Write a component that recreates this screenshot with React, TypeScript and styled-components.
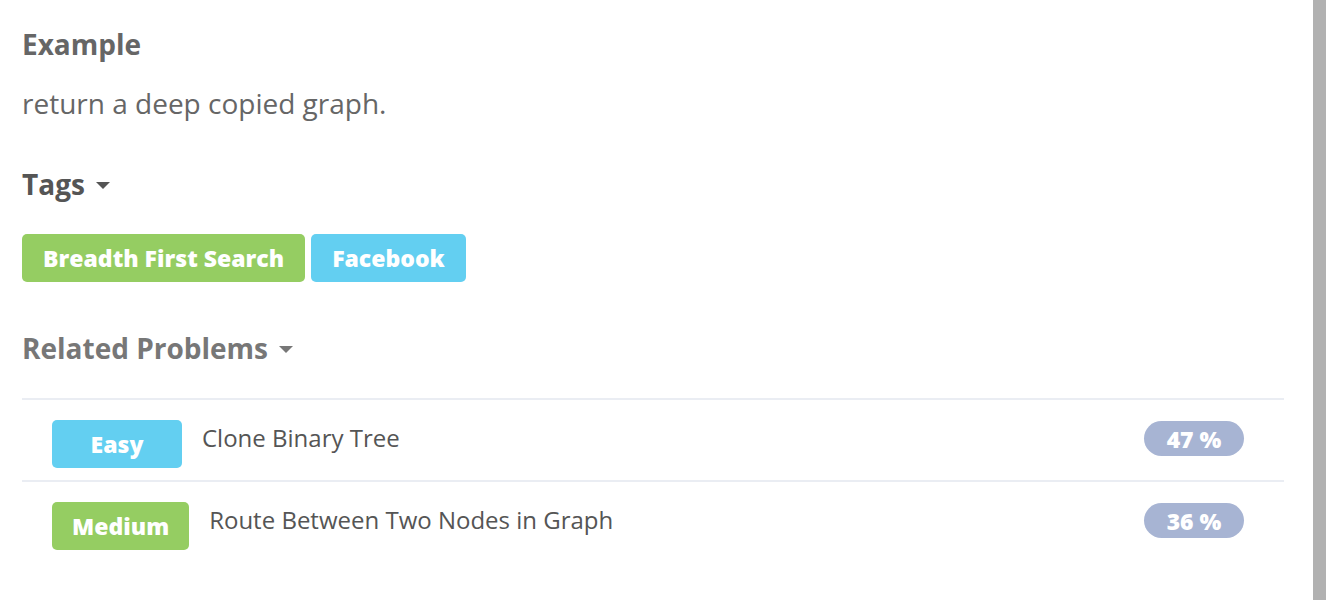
import React from "react";
import styled, { createGlobalStyle } from "styled-components";

const Global = createGlobalStyle`
  html, body { margin: 0; padding: 0; background: #fff; }
  body { font-family: "Open Sans", "Liberation Sans", sans-serif; }
`;

const Page = styled.div`
  display: flex;
  height: 600px;
  overflow: hidden;
`;

const Main = styled.div`
  flex: 1;
  padding: 24px 29px 0 22px;
`;

const ScrollTrack = styled.div`
  width: 13px;
  background: #b1b1b1;
`;

const Heading = styled.h3<{ $tone?: string }>`
  margin: 0;
  font-size: 28px;
  line-height: 40px;
  font-weight: 700;
  color: ${(p) => p.$tone || "#666"};
  display: flex;
  align-items: center;
  gap: 11px;
`;

const Caret = styled.span<{ $tone?: string }>`
  width: 0;
  height: 0;
  border-left: 7px solid transparent;
  border-right: 7px solid transparent;
  border-top: 7px solid ${(p) => p.$tone || "#666"};
  margin-top: 2px;
`;

const Paragraph = styled.p`
  margin: 19px 0 0;
  font-size: 28px;
  line-height: 40px;
  color: #666;
`;

const Section = styled.div<{ $top: number }>`
  margin-top: ${(p) => p.$top}px;
`;

const TagRow = styled.div`
  display: flex;
  gap: 6px;
  margin-top: 30px;
`;

const Tag = styled.span<{ $bg: string }>`
  display: inline-flex;
  align-items: center;
  height: 48px;
  padding: 0 21px;
  border-radius: 5px;
  background: ${(p) => p.$bg};
  color: #fff;
  font-size: 23px;
  font-weight: 800;
`;

const List = styled.div`
  margin-top: 30px;
  border-top: 2px solid #eaedf3;
`;

const Row = styled.div`
  display: flex;
  align-items: flex-start;
  height: 60px;
  padding: 20px 40px 0 30px;
  box-sizing: content-box;
  & + & {
    border-top: 2px solid #eaedf3;
  }
`;

const Level = styled.span<{ $bg: string }>`
  display: inline-flex;
  align-items: center;
  justify-content: center;
  min-width: 130px;
  box-sizing: border-box;
  height: 48px;
  padding: 0 20px;
  border-radius: 5px;
  background: ${(p) => p.$bg};
  color: #fff;
  font-size: 23px;
  font-weight: 800;
`;

const Title = styled.span`
  flex: 1;
  margin-left: 20px;
  font-size: 24px;
  line-height: 36px;
  color: #555;
`;

const Rate = styled.span`
  display: inline-flex;
  align-items: center;
  justify-content: center;
  width: 100px;
  height: 35px;
  margin-top: 1px;
  border-radius: 18px;
  background: #a7b4d3;
  color: #fff;
  font-size: 23px;
  font-weight: 800;
`;

const GREEN = "#95cd62";
const BLUE = "#63cff1";

const problems = [
  { level: "Easy", color: BLUE, title: "Clone Binary Tree", rate: "47 %" },
  { level: "Medium", color: GREEN, title: "Route Between Two Nodes in Graph", rate: "36 %" },
];

export default function App() {
  return (
    <Page>
      <Global />
      <Main>
        <Heading $tone="#666">Example</Heading>
        <Paragraph>return a deep copied graph.</Paragraph>
        <Section $top={41}>
          <Heading $tone="#555">
            Tags <Caret $tone="#555" />
          </Heading>
          <TagRow>
            <Tag $bg={GREEN}>Breadth First Search</Tag>
            <Tag $bg={BLUE}>Facebook</Tag>
          </TagRow>
        </Section>
        <Section $top={46}>
          <Heading $tone="#777">
            Related Problems <Caret $tone="#777" />
          </Heading>
          <List>
            {problems.map((p) => (
              <Row key={p.title}>
                <Level $bg={p.color}>{p.level}</Level>
                <Title>{p.title}</Title>
                <Rate>{p.rate}</Rate>
              </Row>
            ))}
          </List>
        </Section>
      </Main>
      <ScrollTrack />
    </Page>
  );
}
